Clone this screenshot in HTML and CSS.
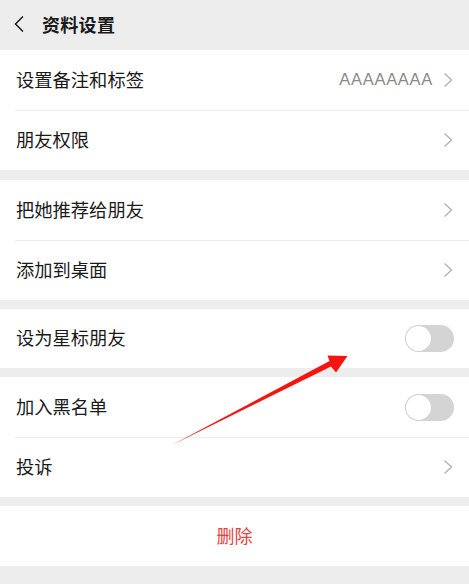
FILE: index.html
```html
<!DOCTYPE html>
<html lang="zh">
<head>
<meta charset="utf-8">
<link rel="stylesheet" href="styles.css">
</head>
<body>
<div class="page">
  <header class="topbar">
    <svg class="back" width="12" height="18" viewBox="0 0 12 18"><path d="M10 1.5 L2.5 9 L10 16.5" fill="none" stroke="#1a1a1a" stroke-width="1.5"/></svg>
    <span class="title">资料设置</span>
  </header>

  <section class="group">
    <div class="row"><span class="label">设置备注和标签</span><span class="value">AAAAAAAA</span><svg class="chev" width="10" height="16" viewBox="0 0 10 16"><path d="M1.5 1.5 L8.5 8 L1.5 14.5" fill="none" stroke="#b2b2b2" stroke-width="1.4"/></svg></div>
    <div class="row"><span class="label">朋友权限</span><svg class="chev" width="10" height="16" viewBox="0 0 10 16"><path d="M1.5 1.5 L8.5 8 L1.5 14.5" fill="none" stroke="#b2b2b2" stroke-width="1.4"/></svg></div>
  </section>

  <section class="group">
    <div class="row"><span class="label">把她推荐给朋友</span><svg class="chev" width="10" height="16" viewBox="0 0 10 16"><path d="M1.5 1.5 L8.5 8 L1.5 14.5" fill="none" stroke="#b2b2b2" stroke-width="1.4"/></svg></div>
    <div class="row"><span class="label">添加到桌面</span><svg class="chev" width="10" height="16" viewBox="0 0 10 16"><path d="M1.5 1.5 L8.5 8 L1.5 14.5" fill="none" stroke="#b2b2b2" stroke-width="1.4"/></svg></div>
  </section>

  <section class="group g3">
    <div class="row"><span class="label">设为星标朋友</span><span class="toggle"></span></div>
  </section>

  <section class="group">
    <div class="row"><span class="label">加入黑名单</span><span class="toggle"></span></div>
    <div class="row"><span class="label">投诉</span><svg class="chev" width="10" height="16" viewBox="0 0 10 16"><path d="M1.5 1.5 L8.5 8 L1.5 14.5" fill="none" stroke="#b2b2b2" stroke-width="1.4"/></svg></div>
  </section>

  <section class="group">
    <div class="row center"><span class="danger">删除</span></div>
  </section>

  <svg class="arrow" width="469" height="584" viewBox="0 0 469 584">
    <polygon points="172,445 331,366.5 336,372.5 347.5,356 327.5,355.5 329.5,361" fill="#f5140f"/>
  </svg>
</div>
</body>
</html>
```

FILE: styles.css
```css
html, body {
  margin: 0;
  padding: 0;
  background: #ededed;
}
body {
  font-family: "Noto Sans CJK SC", "Noto Sans", sans-serif;
  color: #1a1a1a;
}
.page {
  position: relative;
  width: 469px;
  height: 584px;
  overflow: hidden;
}
.topbar {
  height: 50px;
  display: flex;
  align-items: center;
  padding-left: 13px;
  padding-bottom: 2px;
  box-sizing: border-box;
}
.back {
  margin-right: 17px;
}
.title {
  font-size: 18px;
  font-weight: 700;
  letter-spacing: 0.3px;
}
.group {
  background: #fff;
  margin-bottom: 9px;
}
.group:nth-of-type(1) {
  margin-bottom: 10px;
}
.row {
  height: 60px;
  display: flex;
  align-items: center;
  padding: 0 16px 3px 16px;
  box-sizing: border-box;
  position: relative;
}
.g3 .row {
  height: 59px;
}
.row + .row::before {
  content: "";
  position: absolute;
  left: 15px;
  right: 0;
  top: 0;
  border-top: 1px solid #ececec;
}
.label {
  font-size: 18.3px;
  flex: 1;
}
.value {
  font-family: "Liberation Sans", sans-serif;
  font-size: 16.5px;
  color: #8a8a8a;
  margin-right: 10px;
  letter-spacing: 0.7px;
  padding-top: 2px;
}
.chev {
  display: block;
  margin-right: 0;
  margin-top: 2px;
}
.toggle {
  width: 49px;
  height: 27px;
  border-radius: 14px;
  background: #d4d4d4;
  position: relative;
  box-sizing: border-box;
  margin-right: -1px;
  margin-top: 3px;
}
.toggle::after {
  content: "";
  position: absolute;
  left: 1px;
  top: 1px;
  width: 25px;
  height: 25px;
  border-radius: 50%;
  background: #fff;
  box-shadow: 0 0 0 0.5px #cfcfcf;
}
.center {
  justify-content: center;
}
.danger {
  color: #e64340;
  font-size: 18px;
}
.arrow {
  position: absolute;
  left: 0;
  top: 0;
  pointer-events: none;
}
```
